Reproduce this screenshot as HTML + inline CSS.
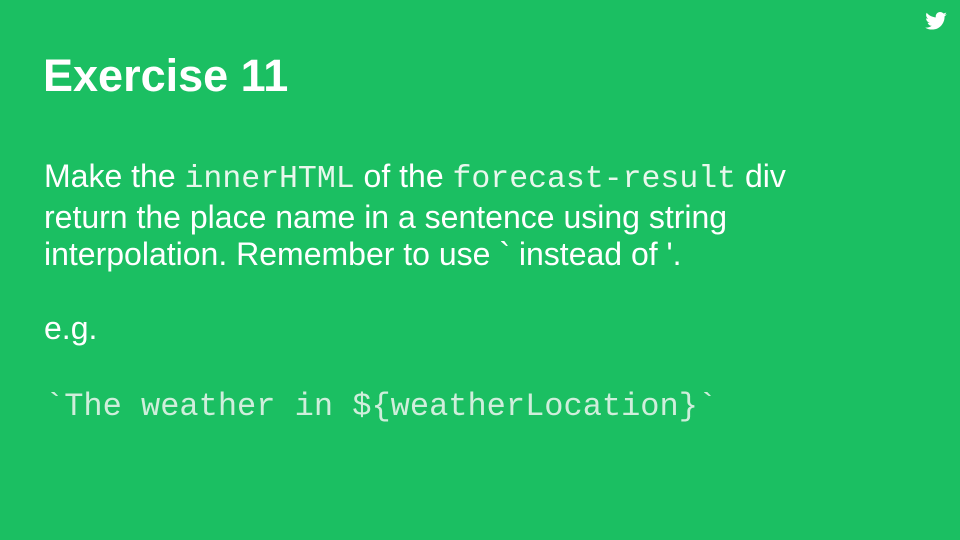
<!DOCTYPE html>
<html><head><meta charset="utf-8"><style>
html,body{margin:0;padding:0}
body{width:960px;height:540px;background:#1bbf62;position:relative;overflow:hidden;font-family:"Liberation Sans",Arial,sans-serif;color:#fff}
.t{position:absolute;left:43px;top:50px;font-size:45px;font-weight:bold;margin:0;line-height:52px}
.p{position:absolute;left:44px;top:158px;font-size:32px;line-height:37.5px;white-space:nowrap}
code{font-family:"Liberation Mono",monospace;font-size:31.5px;color:#e8f7ec}
.eg{position:absolute;left:44px;top:310px;font-size:32px;line-height:37px}
.c{position:absolute;left:45px;top:388px;font-family:"Liberation Mono",monospace;font-size:32px;line-height:38px;color:#cfeedb;white-space:nowrap}
svg{position:absolute;left:925px;top:12px}
</style></head><body>
<svg width="22" height="18" viewBox="0 0 24 20"><path fill="#fff" d="M24 2.4c-.9.4-1.8.7-2.8.8 1-.6 1.8-1.6 2.2-2.7-1 .6-2 1-3.1 1.2C19.3.7 18 0 16.6 0c-2.7 0-4.9 2.2-4.9 4.9 0 .4 0 .8.1 1.1C7.7 5.8 4.1 3.9 1.7.9c-.4.7-.7 1.6-.7 2.5 0 1.7.9 3.2 2.2 4.1-.8 0-1.6-.2-2.2-.6v.1c0 2.4 1.7 4.4 3.9 4.8-.4.1-.8.2-1.3.2-.3 0-.6 0-.9-.1.6 2 2.4 3.4 4.6 3.4-1.7 1.3-3.8 2.1-6.1 2.1-.4 0-.8 0-1.2-.1 2.2 1.4 4.8 2.2 7.5 2.2 9.1 0 14-7.5 14-14v-.6c1-.7 1.8-1.6 2.5-2.5z"/></svg>
<h1 class="t">Exercise 11</h1>
<div class="p">Make the <code>innerHTML</code> of the <code>forecast-result</code> div<br>return the place name in a sentence using string<br>interpolation. Remember to use ` instead of '.</div>
<div class="eg">e.g.</div>
<div class="c">`The weather in ${weatherLocation}`</div>
</body></html>
